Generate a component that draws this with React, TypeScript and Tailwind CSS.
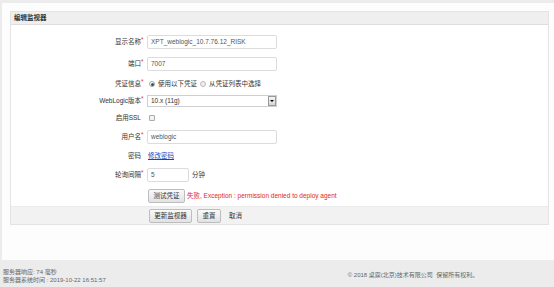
import React from "react";

const font = { fontFamily: '"Liberation Sans", "Noto Sans CJK SC", sans-serif' };

function Row({
  label,
  required,
  h,
  children,
}: {
  label: string;
  required?: boolean;
  h: string;
  children: React.ReactNode;
}) {
  return (
    <div className={`flex items-center ${h}`}>
      <div className="w-[130px] text-right text-[6.5px] text-[#333]">{label}</div>
      <div className="w-[6px] text-[6.5px] text-[#e33] leading-none -mt-[3px]">{required ? "*" : ""}</div>
      {children}
    </div>
  );
}

function TextBox({ value, w = "w-[130px]" }: { value: string; w?: string }) {
  return (
    <div className={`${w} h-[14px] border border-[#dcdcdc] rounded-[2px] bg-white flex items-center px-[3px] text-[6.5px] text-[#555]`}>
      {value}
    </div>
  );
}

function Btn({ children, w }: { children: React.ReactNode; w: string }) {
  return (
    <div
      className={`${w} h-[14px] border border-[#bdbdbd] rounded-[2px] bg-gradient-to-b from-[#fafafa] to-[#e2e2e2] flex items-center justify-center text-[6.5px] text-[#333]`}
    >
      {children}
    </div>
  );
}

export default function App() {
  return (
    <div style={font} className="w-[554px] h-[287px] bg-[#ececec] overflow-hidden flex flex-col">
      {/* main white panel */}
      <div className="ml-[2px] mt-[3px] h-[257px] bg-[#fdfdfd] pt-[8px] pl-[8px] pr-[5px]">
        <div className="border border-[#e4e4e4] bg-white">
          {/* header */}
          <div className="h-[13px] bg-[#efefef] border-b border-[#dedede] flex items-center pl-[3px] text-[6.5px] font-bold text-[#333]">
            编辑监视器
          </div>

          {/* form */}
          <div className="pt-[6px]">
            <Row label="显示名称" required h="h-[22px]">
              <TextBox value="XPT_weblogic_10.7.76.12_RISK" />
            </Row>
            <Row label="端口" required h="h-[22px]">
              <TextBox value="7007" />
            </Row>
            <Row label="凭证信息" required h="h-[18px]">
              <div className="flex items-center text-[6.5px] text-[#333]">
                <span className="w-[6px] h-[6px] rounded-full border border-[#9aa] bg-white flex items-center justify-center ml-[2px] mr-[3px]">
                  <span className="w-[3px] h-[3px] rounded-full bg-[#2d4f7a]" />
                </span>
                使用以下凭证
                <span className="w-[6px] h-[6px] rounded-full border border-[#bbb] bg-[#eee] ml-[3px] mr-[3px]" />
                从凭证列表中选择
              </div>
            </Row>
            <Row label="WebLogic版本" required h="h-[16px]">
              <div className="w-[130px] h-[12px] border border-[#cfcfcf] bg-white flex items-center justify-between pl-[3px] text-[6.5px] text-[#333]">
                10.x (11g)
                <span className="w-[8px] h-[10px] border border-[#999] bg-gradient-to-b from-[#f6f6f6] to-[#d6d6d6] flex items-center justify-center">
                  <span className="w-0 h-0 border-l-[2px] border-r-[2px] border-t-[2px] border-l-transparent border-r-transparent border-t-black" />
                </span>
              </div>
            </Row>
            <Row label="启用SSL" h="h-[18px]">
              <span className="ml-[2px] w-[6px] h-[6px] border border-[#aaa] bg-[#f2f2f2] rounded-[1px]" />
            </Row>
            <Row label="用户名" required h="h-[20px]">
              <TextBox value="weblogic" />
            </Row>
            <Row label="密码" h="h-[18px]">
              <span className="ml-[1px] text-[6.5px] text-[#1a44b8] underline">修改密码</span>
            </Row>
            <Row label="轮询间隔" required h="h-[20px]">
              <TextBox value="5" w="w-[42px]" />
              <span className="ml-[3px] text-[6.5px] text-[#333]">分钟</span>
            </Row>
            <div className="flex items-center h-[21px]">
              <div className="w-[137px]" />
              <Btn w="w-[37px]">测试凭证</Btn>
              <span className="ml-[2px] text-[6.5px] text-[#e0261f]">
                失败, Exception : permission denied to deploy agent
              </span>
            </div>
          </div>

          {/* actions */}
          <div className="h-[18px] bg-[#f2f2f2] border-t border-[#ebebeb] flex items-center">
            <div className="w-[138px]" />
            <Btn w="w-[43px]">更新监视器</Btn>
            <div className="w-[5px]" />
            <Btn w="w-[24px]">重置</Btn>
            <span className="ml-[8px] text-[6.5px] text-[#333]">取消</span>
          </div>
        </div>
      </div>

      {/* footer */}
      <div className="flex-1 flex pl-[3px] pt-[8px] text-[6px] text-[#666]">
        <div className="flex flex-col leading-[8px]">
          <span>服务器响应: 74 毫秒</span>
          <span>服务器系统时间 : 2019-10-22 16:51:57</span>
        </div>
        <div className="ml-[242px] mt-[3px] leading-[8px]">© 2018 桌霆(北京)技术有限公司&nbsp;&nbsp;保留所有权利。</div>
      </div>
    </div>
  );
}
